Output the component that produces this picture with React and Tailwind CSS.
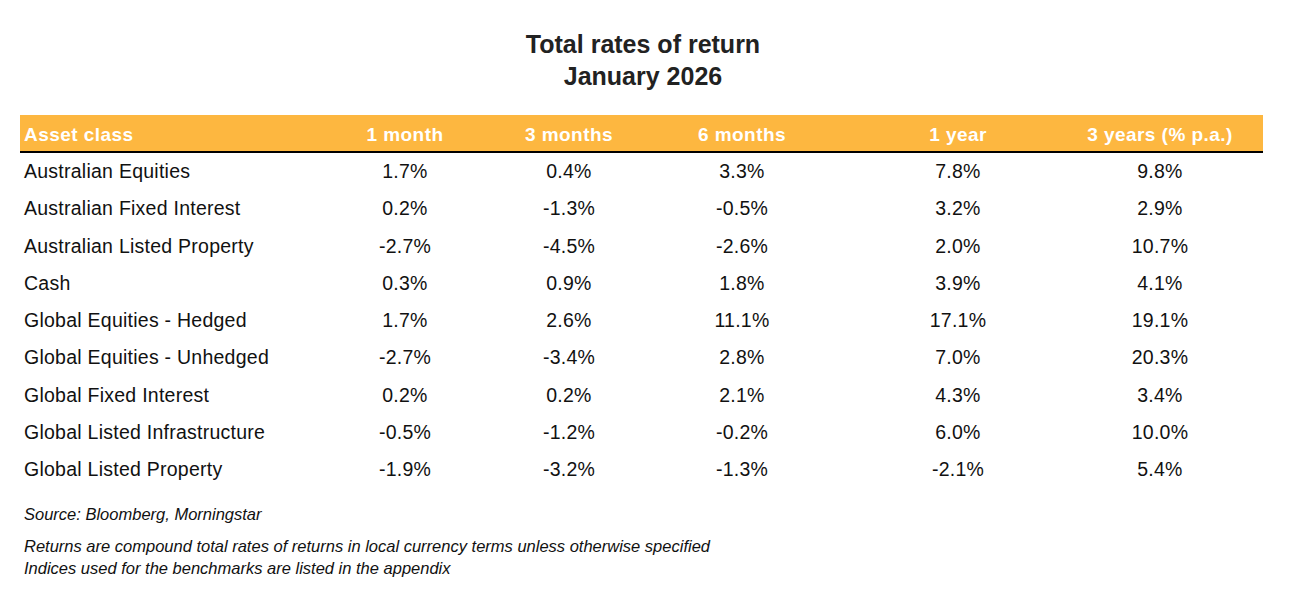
import React from "react";

const rows = [
  ["Australian Equities", "1.7%", "0.4%", "3.3%", "7.8%", "9.8%"],
  ["Australian Fixed Interest", "0.2%", "-1.3%", "-0.5%", "3.2%", "2.9%"],
  ["Australian Listed Property", "-2.7%", "-4.5%", "-2.6%", "2.0%", "10.7%"],
  ["Cash", "0.3%", "0.9%", "1.8%", "3.9%", "4.1%"],
  ["Global Equities - Hedged", "1.7%", "2.6%", "11.1%", "17.1%", "19.1%"],
  ["Global Equities - Unhedged", "-2.7%", "-3.4%", "2.8%", "7.0%", "20.3%"],
  ["Global Fixed Interest", "0.2%", "0.2%", "2.1%", "4.3%", "3.4%"],
  ["Global Listed Infrastructure", "-0.5%", "-1.2%", "-0.2%", "6.0%", "10.0%"],
  ["Global Listed Property", "-1.9%", "-3.2%", "-1.3%", "-2.1%", "5.4%"],
];

const headers = ["Asset class", "1 month", "3 months", "6 months", "1 year", "3 years (% p.a.)"];

const grid = "grid grid-cols-[303px_164px_164px_182px_250px_154px_26px]";

export default function App() {
  return (
    <div className="w-[1296px] h-[602px] bg-white font-['Liberation_Sans',Arial,sans-serif] text-black overflow-hidden">
      <div className="pt-[28px] pr-[10px] text-center text-[25px] leading-[32px] font-bold text-[#222222]">
        <div>Total rates of return</div>
        <div>January 2026</div>
      </div>
      <div className="ml-[20px] mt-[23px] w-[1243px]">
        <div className={`${grid} h-[38px] pt-[4px] items-center bg-[#fdb740] border-b-2 border-black text-white font-bold text-[19px] tracking-[0.45px]`}>
          {headers.map((h, i) => (
            <div key={i} className={i === 0 ? "pl-[4px]" : "text-center"}>
              {h}
            </div>
          ))}
          <div />
        </div>
        {rows.map((r, ri) => (
          <div key={ri} className={`${grid} h-[37.25px] items-center text-[19.5px] tracking-[0.25px] text-[#111111]`}>
            {r.map((c, ci) => (
              <div key={ci} className={ci === 0 ? "pl-[4px]" : "text-center"}>
                {c}
              </div>
            ))}
            <div />
          </div>
        ))}
      </div>
      <div className="ml-[24px] mt-[15px] italic text-[16.5px] leading-[22px] text-[#111111]">
        <div>Source: Bloomberg, Morningstar</div>
        <div className="mt-[10px]">Returns are compound total rates of returns in local currency terms unless otherwise specified</div>
        <div>Indices used for the benchmarks are listed in the appendix</div>
      </div>
    </div>
  );
}
